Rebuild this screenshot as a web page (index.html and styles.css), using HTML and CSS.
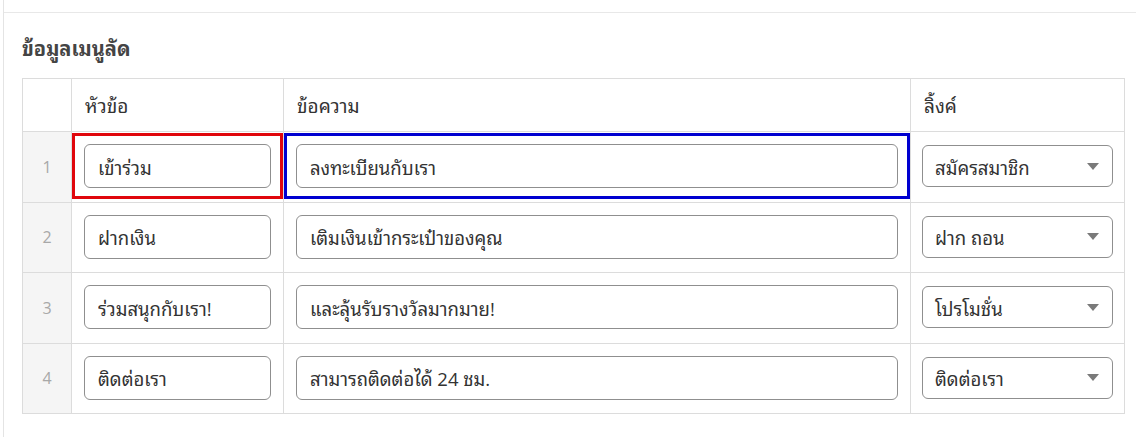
FILE: index.html
```html
<!DOCTYPE html>
<html lang="th">
<head>
<meta charset="utf-8">
<title>ข้อมูลเมนูลัด</title>
<link rel="stylesheet" href="styles.css">
</head>
<body>
<div class="panel">
  <div class="topline"></div>
  <h3 class="title">ข้อมูลเมนูลัด</h3>
  <table class="menu">
    <colgroup>
      <col class="c-num"><col class="c-title"><col class="c-text"><col class="c-link">
    </colgroup>
    <thead>
      <tr><th></th><th>หัวข้อ</th><th>ข้อความ</th><th>ลิ้งค์</th></tr>
    </thead>
    <tbody>
      <tr>
        <td class="num">1</td>
        <td class="cell"><span class="mark mark-red"></span><input class="field" value="เข้าร่วม"></td>
        <td class="cell"><span class="mark mark-blue"></span><input class="field" value="ลงทะเบียนกับเรา"></td>
        <td class="cell sel"><div class="select"><span>สมัครสมาชิก</span><i class="caret"></i></div></td>
      </tr>
      <tr>
        <td class="num">2</td>
        <td class="cell"><input class="field" value="ฝากเงิน"></td>
        <td class="cell"><input class="field" value="เติมเงินเข้ากระเป๋าของคุณ"></td>
        <td class="cell sel"><div class="select"><span>ฝาก ถอน</span><i class="caret"></i></div></td>
      </tr>
      <tr>
        <td class="num">3</td>
        <td class="cell"><input class="field" value="ร่วมสนุกกับเรา!"></td>
        <td class="cell"><input class="field" value="และลุ้นรับรางวัลมากมาย!"></td>
        <td class="cell sel"><div class="select"><span>โปรโมชั่น</span><i class="caret"></i></div></td>
      </tr>
      <tr>
        <td class="num">4</td>
        <td class="cell"><input class="field" value="ติดต่อเรา"></td>
        <td class="cell"><input class="field" value="สามารถติดต่อได้ 24 ชม."></td>
        <td class="cell sel"><div class="select"><span>ติดต่อเรา</span><i class="caret"></i></div></td>
      </tr>
    </tbody>
  </table>
</div>
</body>
</html>
```
FILE: styles.css
```css
* { box-sizing: border-box; }
html, body { margin: 0; padding: 0; background: #fff; }
body {
  font-family: "Open Sans", "Noto Sans Thai Looped", "Noto Sans Thai", "Noto Sans", sans-serif;
  color: #333;
  width: 1136px;
  height: 437px;
  overflow: hidden;
}
.panel {
  margin-left: 3px;
  border-left: 1px solid #e4e4e4;
  height: 437px;
  padding: 0 0 0 18px;
}
.topline {
  height: 13px;
  border-bottom: 1px solid #e8e8e8;
  margin-left: -18px;
}
.title {
  margin: 0;
  padding: 22px 0 0 0;
  height: 65px;
  font-size: 20px;
  font-weight: 700;
  color: #444;
  line-height: 28px;
}
.menu {
  border-collapse: collapse;
  width: 1102px;
  table-layout: fixed;
}
.c-num { width: 49px; }
.c-title { width: 212px; }
.c-text { width: 627px; }
.c-link { width: 214px; }
.menu th, .menu td {
  border: 1px solid #dcdcdc;
}
.menu th {
  height: 53px;
  text-align: left;
  font-weight: 400;
  font-size: 19px;
  padding: 0 0 2px 13px;
  color: #333;
}
.menu td { height: 70.5px; }
.num {
  background: #f5f5f5;
  text-align: center;
  color: #a8a8a8;
  font-size: 16px;
}
.cell {
  position: relative;
  padding: 0 12px 1px 12px;
}
.cell.sel { padding: 0 11px 1px 11px; }
.field {
  display: block;
  width: 100%;
  height: 44px;
  border: 1px solid #8f8f8f;
  border-radius: 6px;
  padding: 0 13px;
  font: inherit;
  font-size: 18.5px;
  color: #333;
  background: #fff;
  outline: none;
}
.select {
  display: flex;
  align-items: center;
  justify-content: space-between;
  height: 42px;
  border: 1px solid #8f8f8f;
  border-radius: 6px;
  padding: 0 12px 0 12px;
  font-size: 18.5px;
  color: #333;
  background: #fff;
}
.caret {
  width: 0;
  height: 0;
  border-left: 6px solid transparent;
  border-right: 6px solid transparent;
  border-top: 7px solid #7a7a7a;
  margin-right: 1px;
}
.mark {
  position: absolute;
  left: 0;
  right: 0;
  top: 1px;
  bottom: 3px;
  border: 3px solid;
  pointer-events: none;
}
.mark-red { border-color: #e0060c; }
.mark-blue { border-color: #0000d0; }
```
